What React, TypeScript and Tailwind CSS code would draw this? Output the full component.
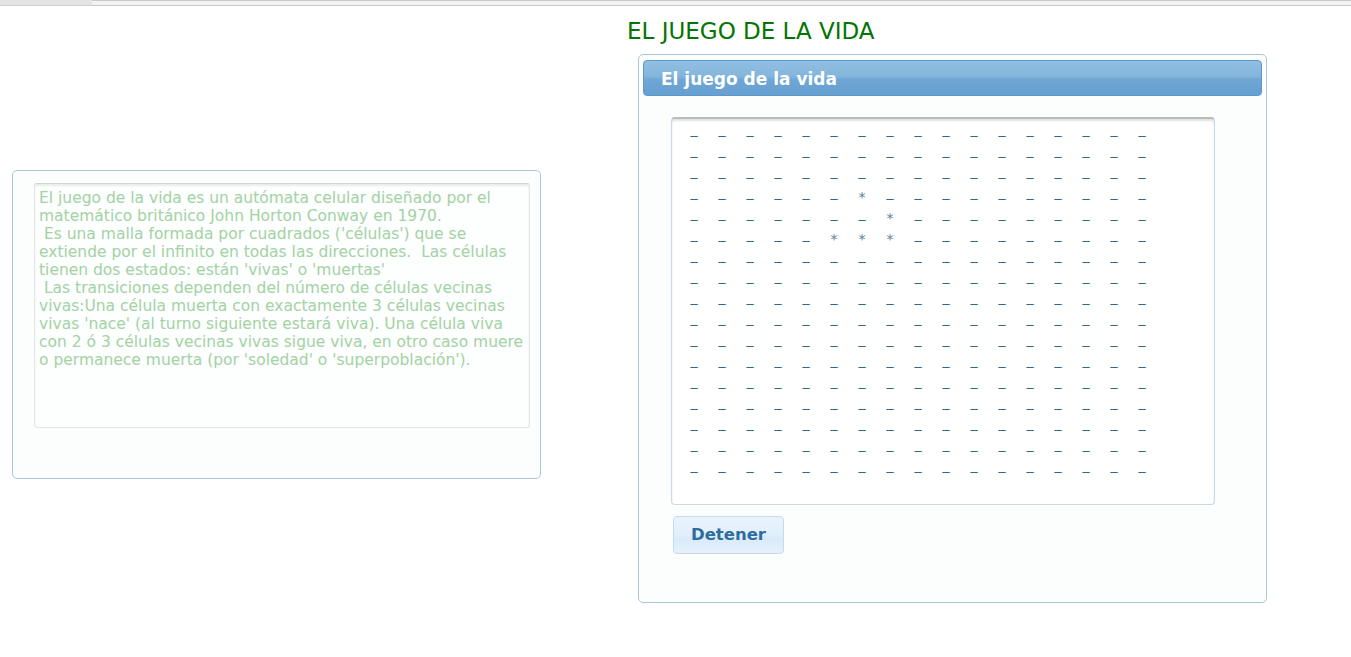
import React from "react";

const ALIVE = new Set(["3-6", "4-7", "5-5", "5-6", "5-7"]);

const LINES = [
  "El juego de la vida es un autómata celular diseñado por el",
  "matemático británico John Horton Conway en 1970.",
  " Es una malla formada por cuadrados ('células') que se",
  "extiende por el infinito en todas las direcciones.  Las células",
  "tienen dos estados: están 'vivas' o 'muertas'",
  " Las transiciones dependen del número de células vecinas",
  "vivas:Una célula muerta con exactamente 3 células vecinas",
  "vivas 'nace' (al turno siguiente estará viva). Una célula viva",
  "con 2 ó 3 células vecinas vivas sigue viva, en otro caso muere",
  "o permanece muerta (por 'soledad' o 'superpoblación').",
];

export default function App() {
  const rows = Array.from({ length: 17 }, (_, i) => i);
  const cols = Array.from({ length: 17 }, (_, i) => i);
  return (
    <div className="w-[1351px] h-[657px] bg-white overflow-hidden font-['DejaVu_Sans',sans-serif]">
      {/* top strip */}
      <div className="flex h-[6px]">
        <div className="w-[92px] bg-[#e4e4e4] border-b border-[#cfcfcf]" />
        <div className="flex-1 bg-[#f2f2f2] border-t border-b border-[#c9c9c9]" />
      </div>
      <div className="flex items-start">
        {/* left panel */}
        <div className="ml-[12px] mt-[164px] w-[529px] h-[309px] rounded-[5px] border border-[#aac6dc] bg-[#fcfdfd] pl-[21px] pr-[10px] pt-[12px]">
          <div className="h-[245px] rounded-[3px] border border-[#e3e6e8] border-t-[#d2d4d6] bg-[#fdfefe] shadow-[inset_0_2px_2px_rgba(0,0,0,0.08)] pl-[4px] pt-[5px] overflow-hidden">
            <div className="text-[15.5px] leading-[18px] text-[#a3d2a3] whitespace-pre">
              {LINES.map((l, i) => (
                <div key={i}>{l}</div>
              ))}
            </div>
          </div>
        </div>
        {/* right column */}
        <div className="ml-[86px] flex flex-col">
          <h1 className="text-[23px] leading-[28px] text-[#037503] mt-[11px] whitespace-nowrap">
            EL JUEGO DE LA VIDA
          </h1>
          <div className="ml-[11px] mt-[9px] w-[629px] h-[549px] rounded-[5px] border border-[#aac6dc] bg-[#fcfdfd] px-[4px] pt-[5px]">
            <div className="h-[36px] rounded-[4px] border border-[#5e98cb] bg-[linear-gradient(to_bottom,#92bfe2_0%,#84b5dc_45%,#6ea6d4_55%,#66a0d1_100%)] flex items-center pl-[17px] pt-[3px]">
              <span className="text-white font-bold text-[17px]">El juego de la vida</span>
            </div>
            <div className="ml-[28px] mt-[21px] w-[544px] h-[388px] rounded-[4px] border border-[#c9d9e6] border-t-[#b9bcbf] border-t-2 bg-white shadow-[inset_0_2px_2px_rgba(0,0,0,0.12)] pl-[8px]">
              <div className="text-[14px] leading-[21px] text-[#2f6a8a]">
                {rows.map((r) => (
                  <div key={r} className="flex h-[21px]">
                    {cols.map((c) =>
                      ALIVE.has(`${r}-${c}`) ? (
                        <span key={c} className="w-[28px] text-center relative top-[5px] text-[14px] text-[#60809e]">*</span>
                      ) : (
                        <span key={c} className="w-[28px] text-center">_</span>
                      )
                    )}
                  </div>
                ))}
              </div>
            </div>
            <button className="ml-[30px] mt-[11px] w-[111px] h-[38px] rounded-[4px] border border-[#c5dbec] bg-[linear-gradient(to_bottom,#eaf3fc_0%,#e2effb_50%,#d9eafa_60%,#e6f1fc_100%)] text-[#2e6e9e] font-bold text-[16.5px]">
              Detener
            </button>
          </div>
        </div>
      </div>
    </div>
  );
}
